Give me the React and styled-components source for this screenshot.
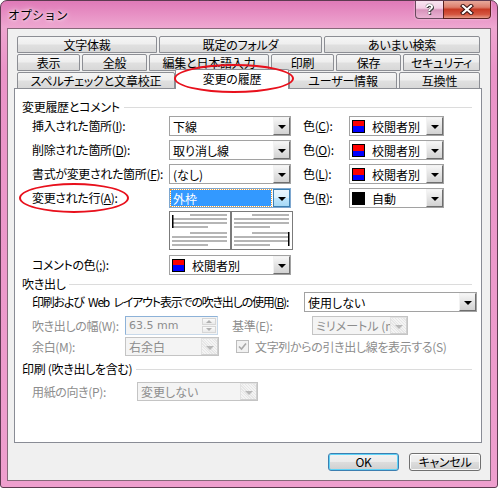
import React from "react";
import styled, { createGlobalStyle } from "styled-components";

const UI_FONT = `"Noto Sans CJK JP", "Noto Sans", "Liberation Sans", sans-serif`;

const GlobalStyle = createGlobalStyle`
  html, body {
    margin: 0;
    padding: 0;
    background: #ffffff;
  }
  body {
    font-family: ${UI_FONT};
    font-size: 12px;
    font-feature-settings: "palt";
    color: #000;
  }
  * {
    box-sizing: border-box;
  }
`;

const Window = styled.div`
  position: relative;
  width: 498px;
  height: 488px;
  border: 1px solid #5d3a50;
  border-radius: 7px 7px 3px 3px;
  background: linear-gradient(180deg, #e07ab8 0, #eea6d0 26px, #ea94c8 70px, #ee9fce 100%);
  padding: 0 6px 6px;
  display: flex;
  flex-direction: column;
  overflow: hidden;
`;

const TitleBar = styled.div`
  height: 27px;
  flex: none;
  display: flex;
  justify-content: space-between;
  align-items: flex-start;
`;

const Title = styled.div`
  margin: 6px 0 0 1px;
  line-height: 16px;
  font-size: 12px;
  font-feature-settings: normal;
  text-shadow: 0 0 6px rgba(255, 255, 255, 0.95), 0 0 3px rgba(255, 255, 255, 0.9);
`;

const CaptionButtons = styled.div`
  display: flex;
  margin-top: -1px;
  filter: drop-shadow(0 0 1px rgba(255, 255, 255, 0.6));
`;

const HelpButton = styled.div`
  width: 28px;
  height: 19px;
  border: 1px solid #6a4a5e;
  border-top: none;
  border-right: none;
  border-radius: 0 0 0 4px;
  background: linear-gradient(180deg, rgba(255, 255, 255, 0.7) 0, rgba(255, 255, 255, 0.45) 45%, rgba(190, 120, 160, 0.45) 55%, rgba(230, 170, 205, 0.7) 100%);
  display: flex;
  align-items: center;
  justify-content: center;
  font-family: "Liberation Sans", sans-serif;
  font-weight: bold;
  font-size: 14px;
  color: #fff;
  text-shadow: 0 0 1px #2a2a2a, 0 0 1px #2a2a2a, 1px 1px 0 #444;
`;

const CloseButton = styled.div`
  width: 48px;
  height: 19px;
  border: 1px solid #5b2020;
  border-top: none;
  border-radius: 0 0 4px 0;
  background: linear-gradient(180deg, #eab0a3 0, #dd7e6c 40%, #c83a24 52%, #d45640 80%, #e79a88 100%);
  display: flex;
  align-items: center;
  justify-content: center;
`;

const Client = styled.div`
  flex: 1;
  background: #f0f0f0;
  border: 1px solid #86687a;
  padding: 7px 8px 9px 6px;
  display: flex;
  flex-direction: column;
`;

const TabStrip = styled.div`
  margin: 0 2px 0 3px;
  display: flex;
  flex-direction: column;
  gap: 1px;
`;

const TabRow = styled.div`
  display: flex;
  gap: 2px;
  height: 17px;
`;

const Tab = styled.div`
  position: relative;
  flex: ${(p) => (p.$w ? "none" : "1")};
  width: ${(p) => (p.$w ? `${p.$active ? p.$w + 4 : p.$w}px` : "auto")};
  height: ${(p) => (p.$active ? "20px" : "17px")};
  margin: ${(p) => (p.$active ? "-3px -2px 0" : "0")};
  z-index: ${(p) => (p.$active ? 2 : 1)};
  border: 1px solid #8c8e94;
  border-bottom: ${(p) => (p.$active ? "none" : "1px solid #8c8e94")};
  border-radius: 2px 2px 0 0;
  background: ${(p) =>
    p.$active
      ? "#ffffff"
      : "linear-gradient(180deg, #f5f5f5 0, #eeeeee 48%, #e0e0e0 52%, #d8d8d8 100%)"};
  display: flex;
  align-items: center;
  justify-content: center;
  line-height: 14px;
  letter-spacing: -0.2px;
  padding-bottom: ${(p) => (p.$active ? "1px" : "0")};
  white-space: nowrap;
`;

const Panel = styled.div`
  flex: 1;
  margin-top: -1px;
  background: #ffffff;
  border: 1px solid #898c95;
  padding: 11px 4px 0 7px;
`;

const GroupHeader = styled.div`
  display: flex;
  align-items: center;
  gap: 4px;
  height: 14px;
  line-height: 14px;
  margin-top: ${(p) => p.$mt || 0}px;
  margin-right: 5px;
  letter-spacing: -0.3px;
  white-space: nowrap;
  &::after {
    content: "";
    flex: 1;
    height: 1px;
    background: #dcdcdc;
  }
`;

const Section = styled.div`
  padding-left: 10px;
  display: flex;
  flex-direction: column;
`;

const FieldRow = styled.div`
  display: flex;
  align-items: center;
  margin-top: ${(p) => p.$mt || 0}px;
`;

const Label = styled.span`
  flex: none;
  width: ${(p) => (p.$w ? `${p.$w}px` : "auto")};
  margin-left: ${(p) => p.$ml || 0}px;
  color: ${(p) => (p.$disabled ? "#8d8d8d" : "#000")};
  line-height: 14px;
  letter-spacing: ${(p) => (p.$tight ? "-1.2px" : "-0.35px")};
  word-spacing: ${(p) => (p.$tight ? "3px" : "normal")};
  white-space: nowrap;
  u {
    text-decoration: underline;
    text-underline-offset: 1px;
  }
`;

const ComboBox = styled.div`
  flex: none;
  width: ${(p) => p.$w}px;
  height: ${(p) => p.$h}px;
  display: flex;
  align-items: stretch;
  border: 1px solid ${(p) => (p.$focused ? "#7ea7cf" : p.$disabled ? "#c4c4c4" : "#a2a2a2")};
  background: ${(p) => (p.$disabled ? "#f4f4f4" : "#ffffff")};
`;

const ComboValue = styled.div`
  flex: 1;
  display: flex;
  align-items: center;
  min-width: 0;
  overflow: hidden;
  white-space: nowrap;
  padding-left: ${(p) => (p.$focused ? "2px" : "3px")};
  margin: ${(p) => (p.$focused ? "1px 2px 1px 1px" : "0")};
  color: ${(p) => (p.$focused ? "#ffffff" : p.$disabled ? "#8d8d8d" : "#000")};
  background: ${(p) => (p.$focused ? "#3399ff" : "transparent")};
  outline: ${(p) => (p.$focused ? "1px dotted #e8a040" : "none")};
`;

const Swatch = styled.span`
  flex: none;
  align-self: center;
  width: 13px;
  height: 13px;
  margin: 0 4px 0 2px;
  border: 1px solid #000;
  background: ${(p) => (p.$kind === "black" ? "#000" : "linear-gradient(180deg, #ff0000 50%, #0000ff 50%)")};
`;

const DropButton = styled.div`
  flex: none;
  width: 17px;
  display: flex;
  align-items: center;
  justify-content: center;
  padding-top: 2px;
  border: 1px solid;
  border-color: ${(p) =>
    p.$focused
      ? "#3c7fb1"
      : p.$disabled
      ? "#e2e2e2 #d0d0d0 #d0d0d0 #e2e2e2"
      : "#f2f2f2 #6e6e6e #6e6e6e #f2f2f2"};
  background: ${(p) =>
    p.$focused
      ? "linear-gradient(180deg, #eaf6fd 0, #d9f0fc 50%, #bee6fd 51%, #a7d9f5 100%)"
      : p.$disabled
      ? "repeating-linear-gradient(45deg, #f4f4f4 0 1px, #e6e6e6 1px 2px)"
      : "linear-gradient(180deg, #f6f6f6 0, #e4e4e4 50%, #d2d2d2 100%)"};
`;

const Arrow = styled.span`
  width: 0;
  height: 0;
  border-left: 4px solid transparent;
  border-right: 4px solid transparent;
  border-top: 4px solid ${(p) => (p.$disabled ? "#b8b8b8" : "#000")};
`;

const Preview = styled.div`
  display: flex;
  width: 123px;
  height: 39px;
  margin: 3px 0 0 137px;
`;

const PreviewPage = styled.div`
  flex: 1;
  border: 1px solid #7b7b7b;
  background: #ffffff;
  svg {
    display: block;
  }
`;

const SpinBox = styled.div`
  flex: none;
  width: 93px;
  height: 19px;
  display: flex;
  border: 1px solid;
  border-color: #8db2d8 #c8d9ea #c8d9ea #8db2d8;
  background: #f4f4f4;
`;

const SpinValue = styled.div`
  flex: 1;
  display: flex;
  align-items: center;
  padding-left: 3px;
  color: #8d8d8d;
  font-family: "DejaVu Sans", sans-serif;
  font-size: 11px;
`;

const SpinButtons = styled.div`
  flex: none;
  width: 15px;
  display: flex;
  flex-direction: column;
  gap: 1px;
  padding: 1px 1px 1px 0;
`;

const SpinHalf = styled.div`
  flex: 1;
  border: 1px solid #d6d6d6;
  background: linear-gradient(180deg, #fafafa, #eaeaea);
  display: flex;
  align-items: center;
  justify-content: center;
  &::before {
    content: "";
    border-left: 3px solid transparent;
    border-right: 3px solid transparent;
    ${(p) => (p.$up ? "border-bottom: 3px solid #b0b0b0;" : "border-top: 3px solid #b0b0b0;")}
  }
`;

const CheckBox = styled.span`
  flex: none;
  width: 13px;
  height: 13px;
  margin: 0 6px 0 17px;
  border: 1px solid #bcbcbc;
  background: #f2f2f2;
  display: flex;
  align-items: center;
  justify-content: center;
`;

const ButtonBar = styled.div`
  display: flex;
  justify-content: flex-end;
  gap: 10px;
  margin-top: 10px;
  padding-right: 1px;
`;

const DialogButton = styled.div`
  width: ${(p) => p.$w}px;
  height: 18px;
  border: 1px solid ${(p) => (p.$default ? "#3c7fb1" : "#707070")};
  border-radius: 3px;
  box-shadow: inset 0 0 0 1px ${(p) => (p.$default ? "#5fd3f7" : "rgba(255, 255, 255, 0.85)")};
  background: linear-gradient(180deg, #f2f2f2 0, #ebebeb 48%, #dddddd 52%, #cfcfcf 100%);
  display: flex;
  align-items: center;
  justify-content: center;
  line-height: 14px;
  letter-spacing: -0.3px;
`;

const Ellipse = styled.div`
  position: absolute;
  left: ${(p) => p.$x}px;
  top: ${(p) => p.$y}px;
  width: ${(p) => p.$w}px;
  height: ${(p) => p.$h}px;
  border: 2px solid #e8101c;
  border-radius: 50%;
  pointer-events: none;
  z-index: 10;
`;

function Select({ w, h = 20, value, swatch, disabled, focused }) {
  return (
    <ComboBox $w={w} $h={h} $disabled={disabled} $focused={focused}>
      {swatch && <Swatch $kind={swatch} />}
      <ComboValue $focused={focused} $disabled={disabled}>
        {value}
      </ComboValue>
      <DropButton $disabled={disabled} $focused={focused}>
        <Arrow $disabled={disabled} />
      </DropButton>
    </ComboBox>
  );
}

function PageThumb({ bar }) {
  const lines = [
    [20, 2, 37],
    [2, 6, 55],
    [2, 10, 55],
    [2, 14, 36],
    [20, 20, 37],
    [2, 24, 55],
    [2, 28, 55],
    [2, 32, 36],
  ];
  return (
    <svg width="60" height="37" viewBox="0 0 60 37">
      {lines.map(([x, y, w], i) => (
        <rect key={i} x={x} y={y} width={w} height="2" fill="#b5b5b5" />
      ))}
      {bar === "left" && <rect x="2" y="3" width="1.5" height="13" fill="#000" />}
      {bar === "right" && <rect x="56" y="20" width="1.5" height="14" fill="#000" />}
    </svg>
  );
}

const tabRows = [
  [
    { label: "文字体裁", w: 140 },
    { label: "既定のフォルダ", w: 163 },
    { label: "あいまい検索" },
  ],
  [
    { label: "表示", w: 63 },
    { label: "全般", w: 65 },
    { label: "編集と日本語入力", w: 120 },
    { label: "印刷", w: 63 },
    { label: "保存", w: 65 },
    { label: "セキュリティ" },
  ],
  [
    { label: "スペルチェックと文章校正", w: 158 },
    { label: "変更の履歴", w: 110, active: true },
    { label: "ユーザー情報", w: 108 },
    { label: "互換性" },
  ],
];

const markRows = [
  { label: "挿入された箇所", key: "I", value: "下線", colorKey: "C", color: "校閲者別", swatch: "rb" },
  { label: "削除された箇所", key: "D", value: "取り消し線", colorKey: "O", color: "校閲者別", swatch: "rb" },
  { label: "書式が変更された箇所", key: "F", value: "(なし)", colorKey: "L", color: "校閲者別", swatch: "rb" },
  { label: "変更された行", key: "A", value: "外枠", colorKey: "R", color: "自動", swatch: "black", focused: true },
];

export default function App() {
  return (
    <>
      <GlobalStyle />
      <Window>
        <TitleBar>
          <Title>オプション</Title>
          <CaptionButtons>
            <HelpButton>?</HelpButton>
            <CloseButton>
              <svg width="14" height="11" viewBox="0 0 14 11">
                <path d="M3 2 L11 9 M11 2 L3 9" stroke="#3b1414" strokeWidth="4.2" strokeLinecap="square" />
                <path d="M3 2 L11 9 M11 2 L3 9" stroke="#ffffff" strokeWidth="2.2" strokeLinecap="square" />
              </svg>
            </CloseButton>
          </CaptionButtons>
        </TitleBar>

        <Client>
          <TabStrip>
            {tabRows.map((row, i) => (
              <TabRow key={i}>
                {row.map((t) => (
                  <Tab key={t.label} $w={t.w} $active={t.active}>
                    {t.label}
                  </Tab>
                ))}
              </TabRow>
            ))}
          </TabStrip>

          <Panel>
            <GroupHeader>変更履歴とコメント</GroupHeader>
            <Section>
              {markRows.map((r, i) => (
                <FieldRow key={r.key} $mt={i === 0 ? 2 : 4}>
                  <Label $w={137}>
                    {r.label}(<u>{r.key}</u>):
                  </Label>
                  <Select w={122} value={r.value} focused={r.focused} />
                  <Label $w={46} $ml={12}>
                    色(<u>{r.colorKey}</u>):
                  </Label>
                  <Select w={95} value={r.color} swatch={r.swatch} />
                </FieldRow>
              ))}
              <Preview>
                <PreviewPage>
                  <PageThumb bar="left" />
                </PreviewPage>
                <PreviewPage>
                  <PageThumb bar="right" />
                </PreviewPage>
              </Preview>
              <FieldRow $mt={5}>
                <Label $w={137}>
                  コメントの色(<u>;</u>):
                </Label>
                <Select w={122} value="校閲者別" swatch="rb" />
              </FieldRow>
            </Section>

            <GroupHeader $mt={2}>吹き出し</GroupHeader>
            <Section>
              <FieldRow $mt={1}>
                <Label $w={272} $tight>
                  印刷および Web レイアウト表示での吹き出しの使用(<u>B</u>):
                </Label>
                <Select w={173} value="使用しない" />
              </FieldRow>
              <FieldRow $mt={4}>
                <Label $w={93} $disabled>
                  吹き出しの幅(W):
                </Label>
                <SpinBox>
                  <SpinValue>63.5 mm</SpinValue>
                  <SpinButtons>
                    <SpinHalf $up />
                    <SpinHalf />
                  </SpinButtons>
                </SpinBox>
                <Label $w={80} $ml={14} $disabled>
                  基準(E):
                </Label>
                <Select w={96} h={19} value="ミリメートル (mm)" disabled />
              </FieldRow>
              <FieldRow $mt={2}>
                <Label $w={93} $disabled>
                  余白(M):
                </Label>
                <Select w={94} h={19} value="右余白" disabled />
                <CheckBox>
                  <svg width="9" height="9" viewBox="0 0 9 9">
                    <path d="M1 4.5 L3.5 7 L8 1.5" fill="none" stroke="#a8a8a8" strokeWidth="1.6" />
                  </svg>
                </CheckBox>
                <Label $disabled>文字列からの引き出し線を表示する(S)</Label>
              </FieldRow>
            </Section>

            <GroupHeader $mt={6}>印刷 (吹き出しを含む)</GroupHeader>
            <Section>
              <FieldRow $mt={6}>
                <Label $w={105} $disabled>
                  用紙の向き(P):
                </Label>
                <Select w={121} h={19} value="変更しない" disabled />
              </FieldRow>
            </Section>
          </Panel>

          <ButtonBar>
            <DialogButton $w={71} $default>
              OK
            </DialogButton>
            <DialogButton $w={72}>キャンセル</DialogButton>
          </ButtonBar>
        </Client>

        <Ellipse $x={173} $y={63} $w={120} $h={29} />
        <Ellipse $x={18} $y={182} $w={110} $h={30} />
      </Window>
    </>
  );
}
